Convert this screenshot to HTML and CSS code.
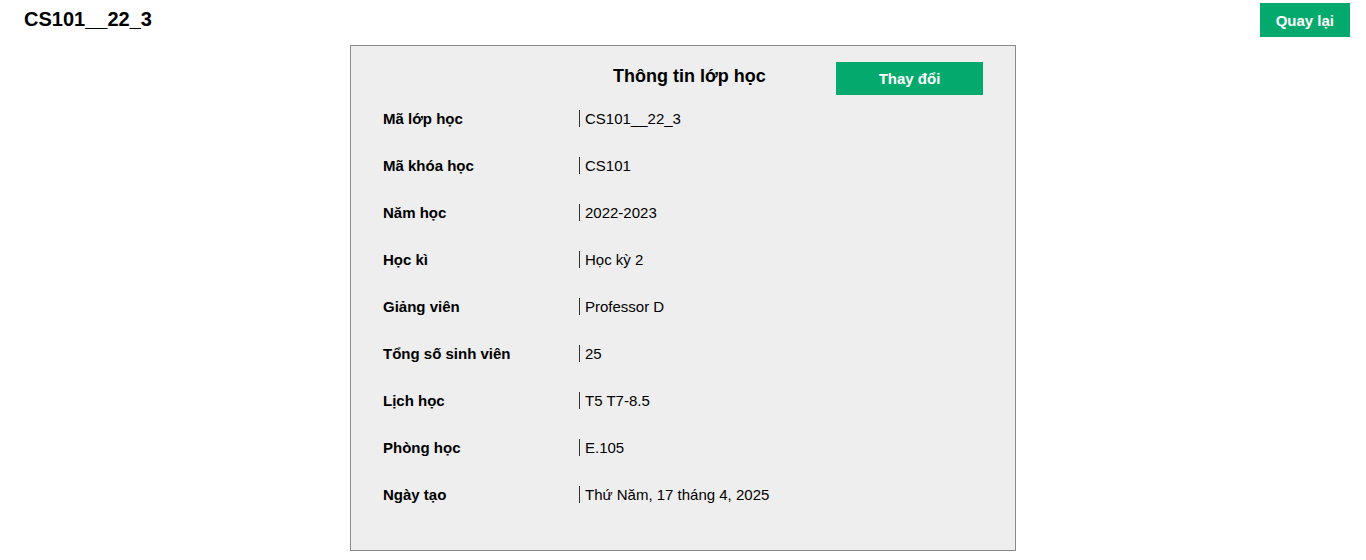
FILE: index.html
```html
<!DOCTYPE html>
<html lang="vi">
<head>
<meta charset="utf-8">
<title>CS101__22_3</title>
<link rel="stylesheet" href="styles.css">
</head>
<body>
<header class="topbar">
  <h1 class="page-title">CS101__22_3</h1>
  <button class="btn btn-back">Quay lại</button>
</header>
<main class="card">
  <div class="card-head">
    <h2 class="card-title">Thông tin lớp học</h2>
    <button class="btn btn-edit">Thay đổi</button>
  </div>
  <div class="rows">
    <div class="row"><span class="label">Mã lớp học</span><span class="value">CS101__22_3</span></div>
    <div class="row"><span class="label">Mã khóa học</span><span class="value">CS101</span></div>
    <div class="row"><span class="label">Năm học</span><span class="value">2022-2023</span></div>
    <div class="row"><span class="label">Học kì</span><span class="value">Học kỳ 2</span></div>
    <div class="row"><span class="label">Giảng viên</span><span class="value">Professor D</span></div>
    <div class="row"><span class="label">Tổng số sinh viên</span><span class="value">25</span></div>
    <div class="row"><span class="label">Lịch học</span><span class="value">T5 T7-8.5</span></div>
    <div class="row"><span class="label">Phòng học</span><span class="value">E.105</span></div>
    <div class="row"><span class="label">Ngày tạo</span><span class="value">Thứ Năm, 17 tháng 4, 2025</span></div>
  </div>
</main>
</body>
</html>
```
FILE: styles.css
```css
* { box-sizing: border-box; }
html, body {
  margin: 0;
  padding: 0;
  background: #fff;
  font-family: "Liberation Sans", Arial, sans-serif;
  color: #000;
}
.topbar {
  display: flex;
  justify-content: space-between;
  align-items: flex-start;
  padding: 3px 16px 0 24px;
  height: 37px;
}
.page-title {
  margin: 0;
  font-size: 20px;
  font-weight: bold;
  line-height: 28px;
  padding-top: 2px;
}
.btn {
  border: none;
  background: #04aa6d;
  color: #fff;
  font-family: "Liberation Sans", Arial, sans-serif;
  font-weight: bold;
  font-size: 15px;
  cursor: pointer;
}
.btn-back {
  height: 34px;
  padding: 0 16px;
}
.card {
  width: 666px;
  margin: 8px auto 0;
  background: #eeeeee;
  border: 1px solid #8a8a8a;
  padding: 16px 32px 32px;
}
.card-head {
  display: flex;
  align-items: center;
  height: 33px;
}
.card-title {
  margin: 0 0 0 230px;
  font-size: 18px;
  font-weight: bold;
  line-height: 22px;
  position: relative;
  top: -3px;
}
.btn-edit {
  margin-left: auto;
  width: 147px;
  height: 33px;
}
.row {
  display: flex;
  align-items: center;
  height: 47px;
  font-size: 15px;
}
.label {
  width: 196px;
  font-weight: bold;
}
.value {
  border-left: 1px solid #333;
  padding-left: 5px;
  line-height: 17px;
}
```
